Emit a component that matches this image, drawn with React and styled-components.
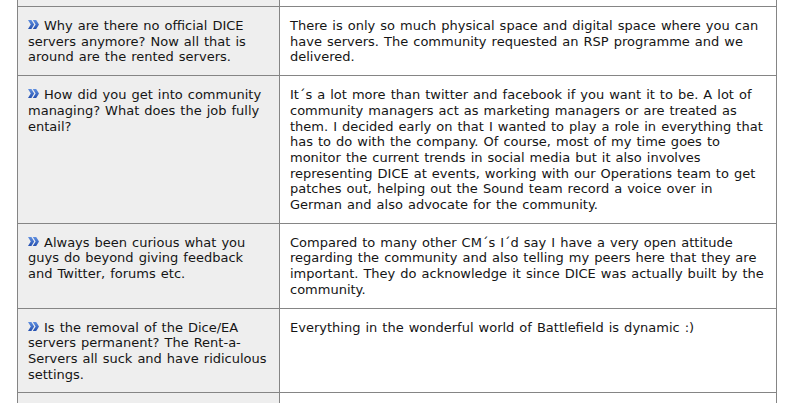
import React from "react";
import styled, { createGlobalStyle } from "styled-components";

const Global = createGlobalStyle`
  html, body { margin: 0; padding: 0; background: #ffffff; }
  body { font-family: "DejaVu Sans", Verdana, sans-serif; }
`;

const Page = styled.div`
  padding-left: 17px;
  width: 790px;
  height: 403px;
  overflow: hidden;
  box-sizing: border-box;
`;

const Table = styled.div`
  width: 760px;
  border-left: 1px solid #858585;
  border-right: 1px solid #858585;
  box-sizing: border-box;
`;

const Row = styled.div`
  display: grid;
  grid-template-columns: 262px 1fr;
  border-bottom: 1px solid #858585;
  min-height: ${(p) => (p.$h ? `${p.$h}px` : "auto")};
`;

const cellText = `
  font-size: 13px;
  letter-spacing: 0;
  word-spacing: 0.9px;
  line-height: 15.7px;
  color: #151515;
`;

const Question = styled.div`
  background: #eeeeee;
  border-right: 1px solid #858585;
  padding: ${(p) => (p.$stub ? "0" : "11px 10px 10px 10px")};
  ${cellText}
`;

const Answer = styled.div`
  background: #ffffff;
  padding: ${(p) => (p.$stub ? "0" : "11px 10px 10px 10px")};
  ${cellText}
`;

const Icon = styled.svg`
  display: inline-block;
  width: 11px;
  height: 9px;
  margin-right: 5px;
  vertical-align: 1px;
`;

const Arrows = () => (
  <Icon viewBox="0 0 11 9">
    <defs>
      <linearGradient id="g" x1="0" y1="0" x2="0" y2="1">
        <stop offset="0" stopColor="#5f8fe0" />
        <stop offset="1" stopColor="#2550b0" />
      </linearGradient>
    </defs>
    <path d="M0 0 L3.4 0 L6.2 4.5 L3.4 9 L0 9 L2.8 4.5 Z" fill="url(#g)" />
    <path d="M4.8 0 L8.2 0 L11 4.5 L8.2 9 L4.8 9 L7.6 4.5 Z" fill="url(#g)" />
  </Icon>
);

const rows = [
  {
    q: "Why are there no official DICE servers anymore? Now all that is around are the rented servers.",
    a: "There is only so much physical space and digital space where you can have servers. The community requested an RSP programme and we delivered.",
  },
  {
    q: "How did you get into community managing? What does the job fully entail?",
    a: "It´s a lot more than twitter and facebook if you want it to be. A lot of community managers act as marketing managers or are treated as them. I decided early on that I wanted to play a role in everything that has to do with the company. Of course, most of my time goes to monitor the current trends in social media but it also involves representing DICE at events, working with our Operations team to get patches out, helping out the Sound team record a voice over in German and also advocate for the community.",
  },
  {
    q: "Always been curious what you guys do beyond giving feedback and Twitter, forums etc.",
    a: "Compared to many other CM´s I´d say I have a very open attitude regarding the community and also telling my peers here that they are important. They do acknowledge it since DICE was actually built by the community.",
  },
  {
    q: "Is the removal of the Dice/EA servers permanent? The Rent-a-Servers all suck and have ridiculous settings.",
    a: "Everything in the wonderful world of Battlefield is dynamic :)",
  },
];

export default function App() {
  return (
    <>
      <Global />
      <Page>
        <Table>
          <Row $h={6}>
            <Question $stub />
            <Answer $stub />
          </Row>
          {rows.map((r, i) => (
            <Row key={i}>
              <Question>
                <Arrows />
                {r.q}
              </Question>
              <Answer>{r.a}</Answer>
            </Row>
          ))}
          <Row $h={40}>
            <Question $stub />
            <Answer $stub />
          </Row>
        </Table>
      </Page>
    </>
  );
}
